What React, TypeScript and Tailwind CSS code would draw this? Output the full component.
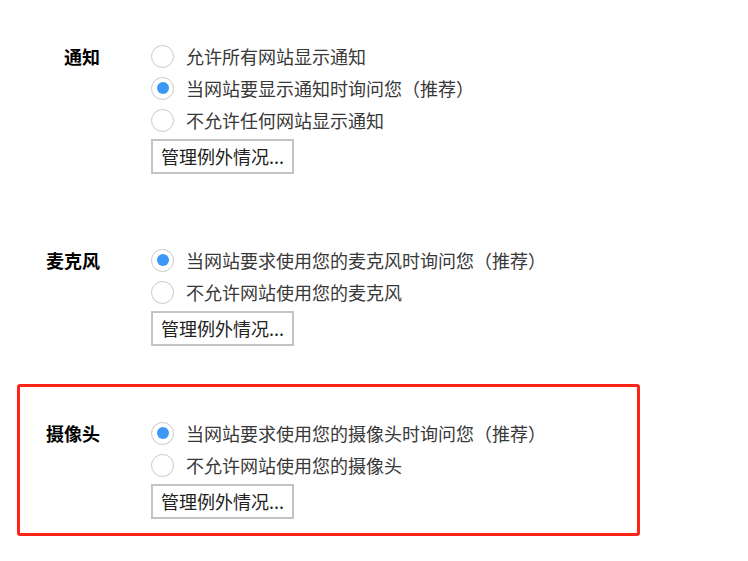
import React from 'react';

type Option = { text: string; checked?: boolean };

const font = { fontFamily: '"Noto Sans CJK SC", "Liberation Sans", sans-serif' };

function Radio({ checked }: { checked?: boolean }) {
  return (
    <span className="flex h-[23px] w-[23px] shrink-0 items-center justify-center rounded-full border border-[#c8c8c8] bg-white">
      {checked && <span className="h-[12px] w-[12px] rounded-full bg-[#3d97f5]" />}
    </span>
  );
}

function Section({ label, options, labelWidth = 'w-[100px]' }: { label: string; options: Option[]; labelWidth?: string }) {
  return (
    <div className="flex">
      <div className={`${labelWidth} h-[32px] shrink-0 text-right text-[18px] font-bold leading-[32px] text-black`}>{label}</div>
      <div className="ml-[51px] flex flex-col">
        {options.map((o, i) => (
          <label key={i} className="flex h-[32px] items-center gap-[12px]">
            <Radio checked={o.checked} />
            <span className="text-[18px] leading-[32px] text-[#383838]">{o.text}</span>
          </label>
        ))}
        <button className="mt-[3px] h-[35px] w-[143px] border-2 border-[#c3c3c3] bg-white text-[18px] text-[#222]">
          管理例外情况...
        </button>
      </div>
    </div>
  );
}

export default function App() {
  return (
    <div className="h-[561px] w-[748px] bg-white pt-[40px]" style={font}>
      <Section
        label="通知"
        options={[
          { text: '允许所有网站显示通知' },
          { text: '当网站要显示通知时询问您（推荐）', checked: true },
          { text: '不允许任何网站显示通知' },
        ]}
      />
      <div className="mt-[70px]">
        <Section
          label="麦克风"
          options={[
            { text: '当网站要求使用您的麦克风时询问您（推荐）', checked: true },
            { text: '不允许网站使用您的麦克风' },
          ]}
        />
      </div>
      <div className="ml-[17px] mt-[38px] w-[623px] rounded-[3px] border-[3px] border-[#ff2418] pb-[14px] pt-[30px]">
        <Section
          label="摄像头"
          labelWidth="w-[80px]"
          options={[
            { text: '当网站要求使用您的摄像头时询问您（推荐）', checked: true },
            { text: '不允许网站使用您的摄像头' },
          ]}
        />
      </div>
    </div>
  );
}
